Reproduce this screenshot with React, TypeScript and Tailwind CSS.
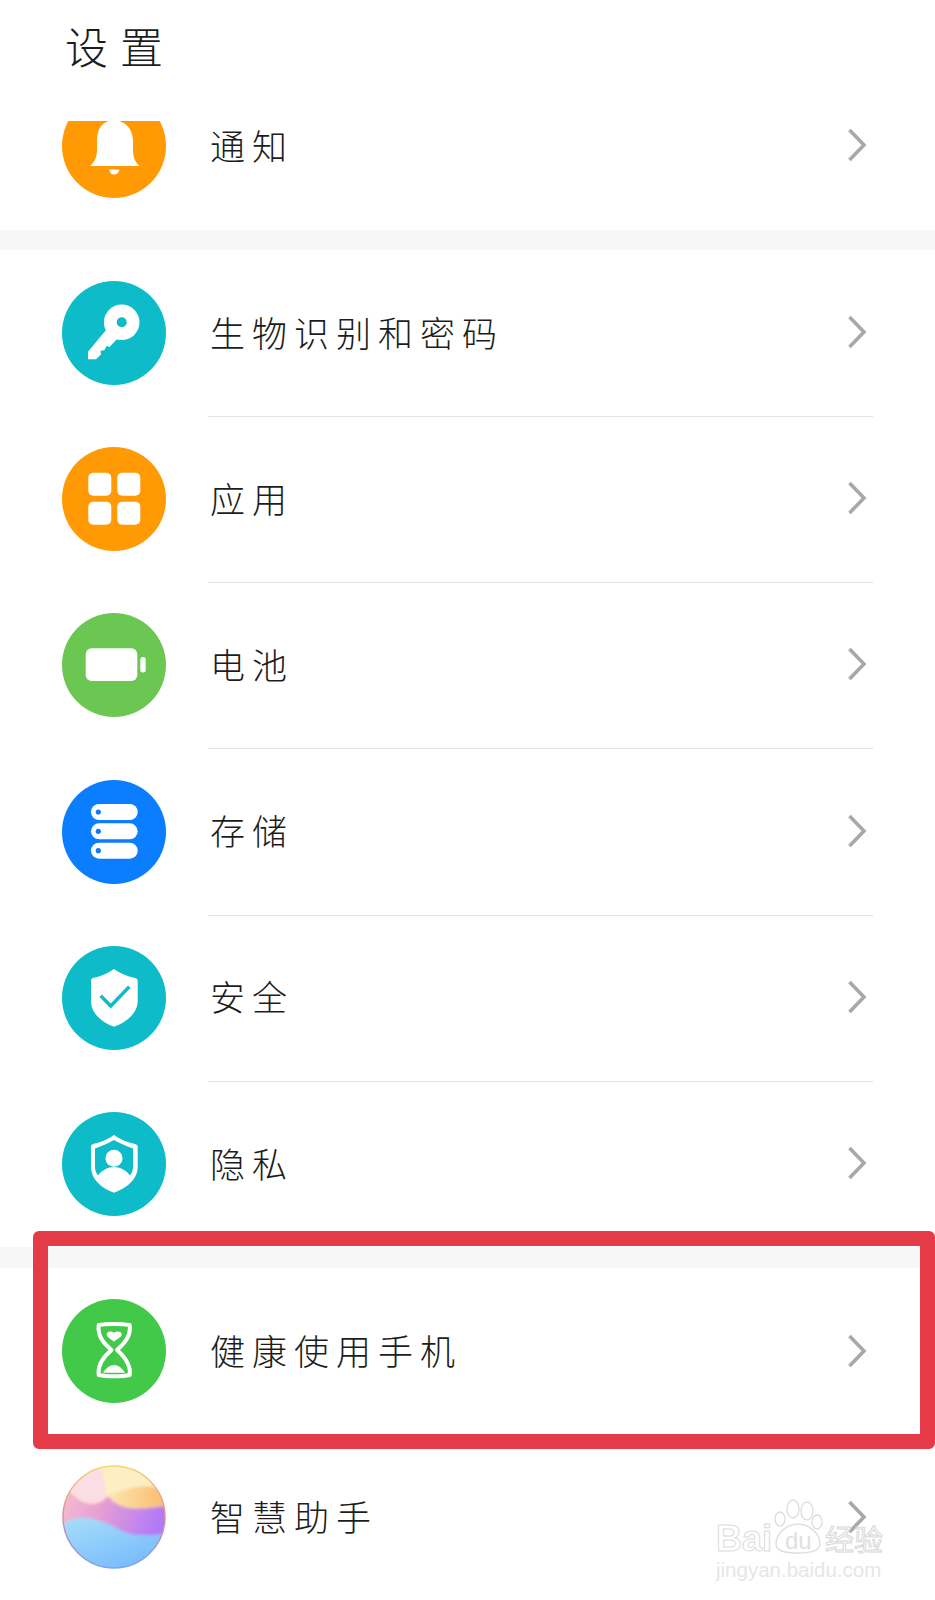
import type { ReactNode } from 'react'

function Chevron() {
  return (
    <svg width="20" height="34" viewBox="0 0 20 34" fill="none" className="mb-[2px] shrink-0">
      <path d="M2.5 2L17 17L2.5 32" stroke="#a8a8a8" strokeWidth="3.6" />
    </svg>
  )
}

function Circle({ color, children }: { color: string; children: ReactNode }) {
  return (
    <svg width="104" height="104" viewBox="0 0 104 104" className="shrink-0">
      <circle cx="52" cy="52" r="52" fill={color} />
      {children}
    </svg>
  )
}

const SHIELD = 'M52 23C58 27 65 30.5 73 32C75 32.4 75.7 33.5 75.7 35V55C75.7 67 65 76 52 80.7C39 76 29 67 29 55V35C29 33.5 29.7 32.4 31 32C39 30.5 46 27 52 23Z'

const bell = (
  <Circle color="#ff9a05">
    <path d="M47 20H57V27C66 29.5 70.5 37 71 46V57C71.5 64 73 68 77.5 72H28C32.5 68 34.5 64 35 57V46C35.5 37 38 29.5 47 27Z" fill="#fff" />
    <path d="M47 75.5H57.5C57 78.5 55 80.5 52 80.5C49.5 80.5 47.5 78.5 47 75.5Z" fill="#fff" />
  </Circle>
)

const key = (
  <Circle color="#0dbcc8">
    <circle cx="59.7" cy="41.3" r="17.8" fill="#fff" />
    <path d="M44 49L26 70.7V78.3H34L39 73.5L38.5 70L42.5 69L44.5 65L47.5 66L55 58Z" fill="#fff" />
    <circle cx="59.7" cy="41.3" r="5" fill="#0dbcc8" />
  </Circle>
)

const apps = (
  <Circle color="#ff9a05">
    <rect x="26.3" y="25.7" width="23" height="23" rx="5" fill="#fff" />
    <rect x="55.3" y="25.7" width="23" height="23" rx="5" fill="#fff" />
    <rect x="26.3" y="54.8" width="23" height="23" rx="5" fill="#fff" />
    <rect x="55.3" y="54.8" width="23" height="23" rx="5" fill="#fff" />
  </Circle>
)

const battery = (
  <Circle color="#6cc752">
    <rect x="23.7" y="35.3" width="51.6" height="32.7" rx="6" fill="#fff" />
    <rect x="78.3" y="44" width="5.4" height="15.6" rx="2.5" fill="#fff" />
  </Circle>
)

const storage = (
  <Circle color="#0a7eff">
    {[24, 43.3, 62.7].map((y) => (
      <g key={y}>
        <rect x="29" y={y} width="46.7" height="16" rx="8" fill="#fff" />
        <circle cx="36.3" cy={y + 8} r="2.6" fill="#0a7eff" />
      </g>
    ))}
  </Circle>
)

const safety = (
  <Circle color="#0dbcc8">
    <path d={SHIELD} fill="#fff" />
    <path d="M38.7 49.7L48.7 60L67.3 40.7" fill="none" stroke="#0dbcc8" strokeWidth="3.4" />
  </Circle>
)

const privacy = (
  <Circle color="#0dbcc8">
    <path d={SHIELD} fill="#fff" />
    <path d="M52 28C58 31.5 65 34.5 71 36.5V55C71 58 70 61 68 63.5C64 58 58 55 52 55C46 55 40 58 36 63.5C34 61 33 58 33 55V36.5C39 34.5 46 31.5 52 28Z" fill="#0dbcc8" />
    <circle cx="52" cy="46.3" r="8.5" fill="#fff" />
  </Circle>
)

const hourglass = (
  <Circle color="#43c94a">
    <path
      d="M36.7 26C44 24.5 60 24.5 67.7 26C69 36 64 43 55 51C64 59 69 67 67.7 76C60 77.8 44 77.8 36.7 76C35.5 67 40 59 49.5 51C40 43 35.5 36 36.7 26Z"
      fill="none"
      stroke="#fff"
      strokeWidth="4"
      strokeLinejoin="round"
    />
    <path d="M52 42.7C48 39.5 44.7 38 44.7 35.2C44.7 32.5 49 31.5 52 33.8C55 31.5 59.7 32.5 59.7 35.2C59.7 38 56 39.5 52 42.7Z" fill="#fff" />
    <path d="M41 73.7C44 69 48 66 52 66C56 66 60 69 63 73.7Z" fill="#fff" />
  </Circle>
)

const assistant = (
  <svg width="104" height="104" viewBox="0 0 104 104" className="shrink-0">
    <defs>
      <clipPath id="ball">
        <circle cx="52" cy="52" r="51" />
      </clipPath>
      <filter id="soft" x="-10%" y="-10%" width="120%" height="120%">
        <feGaussianBlur stdDeviation="1.4" />
      </filter>
      <linearGradient id="band" x1="0" y1="0" x2="1" y2="0.2">
        <stop offset="0" stopColor="#f9c4d0" />
        <stop offset="0.45" stopColor="#e8a0d2" />
        <stop offset="1" stopColor="#b279f8" />
      </linearGradient>
      <linearGradient id="sea" x1="0" y1="0" x2="0.7" y2="1">
        <stop offset="0" stopColor="#a8e0f8" />
        <stop offset="1" stopColor="#74b8fd" />
      </linearGradient>
      <linearGradient id="sun" x1="0" y1="0" x2="1" y2="0">
        <stop offset="0" stopColor="#fde6b0" />
        <stop offset="1" stopColor="#fbb868" />
      </linearGradient>
      <linearGradient id="rim" x1="0.5" y1="0" x2="0.5" y2="1">
        <stop offset="0" stopColor="#f7d576" />
        <stop offset="0.5" stopColor="#d88a9c" />
        <stop offset="1" stopColor="#7aa4ee" />
      </linearGradient>
    </defs>
    <g clipPath="url(#ball)">
      <rect width="104" height="104" fill="#fdeec3" />
      <g filter="url(#soft)">
        <path d="M-6 -6H36C42 12 44 26 44 30C38 40 24 42 14 30C8 24 2 20 -6 18Z" fill="#fbdde6" />
        <path d="M46 31C60 24 80 18 108 24V42C85 42 62 50 46 31Z" fill="url(#sun)" />
        <path d="M-6 18C2 22 8 26 14 32C24 42 38 40 46 31C62 50 85 42 108 41V74H-6Z" fill="url(#band)" />
        <path d="M-6 64C6 54 16 51 26 53C36 55 46 58 56 64C68 71 84 72 108 68V108H-6Z" fill="url(#sea)" />
      </g>
    </g>
    <circle cx="52" cy="52" r="51" fill="none" stroke="url(#rim)" strokeWidth="1.4" />
  </svg>
)

const firstGroup = [
  { icon: key, label: '生物识别和密码' },
  { icon: apps, label: '应用' },
  { icon: battery, label: '电池' },
  { icon: storage, label: '存储' },
  { icon: safety, label: '安全' },
  { icon: privacy, label: '隐私' },
]

const labelClass = 'pb-[4px] pl-[2px] text-[35px] leading-none font-light tracking-[7px] text-[#1c1c1c]'

function Row({ icon, label, line }: { icon: ReactNode; label: string; line?: boolean }) {
  return (
    <div className="flex h-[166.2px] items-center pl-[62px] pr-[62px]">
      {icon}
      <div className={`ml-[42px] flex h-[167px] flex-1 items-center justify-between self-start pr-[6px] ${line ? 'border-b-[1.5px] border-[#e2e2e2]' : ''}`}>
        <span className={labelClass}>{label}</span>
        <Chevron />
      </div>
    </div>
  )
}

// first row is scrolled under the header, only the icon gets cut
function ScrolledRow({ icon, label }: { icon: ReactNode; label: string }) {
  return (
    <div className="flex h-[109px] items-start pl-[62px] pr-[62px]">
      <div className="h-[77px] w-[104px] shrink-0 overflow-hidden">
        <div className="-mt-[27px]">{icon}</div>
      </div>
      <div className="ml-[42px] flex h-[50px] flex-1 items-center justify-between pr-[6px]">
        <span className={labelClass}>{label}</span>
        <Chevron />
      </div>
    </div>
  )
}

function Watermark() {
  return (
    <div className="absolute left-[716px] top-[1498px] h-[84px] w-[172px] font-['Liberation_Sans',sans-serif]">
      <span className="absolute left-0 top-[23px] text-[36px] leading-[36px] font-bold text-transparent [-webkit-text-stroke:1px_#dcdcdc]">Bai</span>
      <svg width="60" height="60" viewBox="0 0 60 60" fill="none" stroke="#dedede" strokeWidth="1.4" className="absolute left-[52px] top-0">
        <ellipse cx="12" cy="21" rx="5" ry="7" />
        <ellipse cx="25" cy="11" rx="6" ry="9" />
        <ellipse cx="39" cy="13" rx="6" ry="9" />
        <ellipse cx="49" cy="24" rx="5" ry="7" />
        <path d="M8 46C8 36 18 26 30 26C42 26 52 36 52 46C52 52 46 55 30 55C14 55 8 52 8 46Z" />
      </svg>
      <span className="absolute left-[69px] top-[31px] text-[24px] leading-[24px] text-[#e0e0e0]">du</span>
      <span className="absolute left-[109px] top-[23px] font-['Noto_Sans_CJK_SC',sans-serif] text-[29px] leading-[34px] text-transparent [-webkit-text-stroke:1px_#d8d8d8]">经验</span>
      <span className="absolute left-0 top-[60px] text-[20.5px] leading-[24px] text-[#e6e6e6]">jingyan.baidu.com</span>
    </div>
  )
}

export default function App() {
  return (
    <div className="relative h-[1600px] w-full overflow-hidden bg-white font-['Noto_Sans_CJK_SC','Liberation_Sans',sans-serif]">
      <div className="h-[121px] pl-[65px] pt-[19px]">
        <h1 className="text-[43px] leading-[52px] font-light tracking-[12px] text-[#1c1c1c]">设置</h1>
      </div>

      <ScrolledRow icon={bell} label="通知" />

      <div className="h-[20px] bg-[#f7f7f7]" />

      {firstGroup.map((item, i) => (
        <Row key={item.label} icon={item.icon} label={item.label} line={i < firstGroup.length - 1} />
      ))}

      <div className="h-[21px] bg-[#f7f7f7]" />

      <Row icon={hourglass} label="健康使用手机" />
      <Row icon={assistant} label="智慧助手" />

      {/* annotation drawn over the screenshot */}
      <div className="absolute left-[33px] right-0 top-[1231px] h-[218px] rounded-[6px] border-[15px] border-[#e53a48]" />
      <Watermark />
    </div>
  )
}
